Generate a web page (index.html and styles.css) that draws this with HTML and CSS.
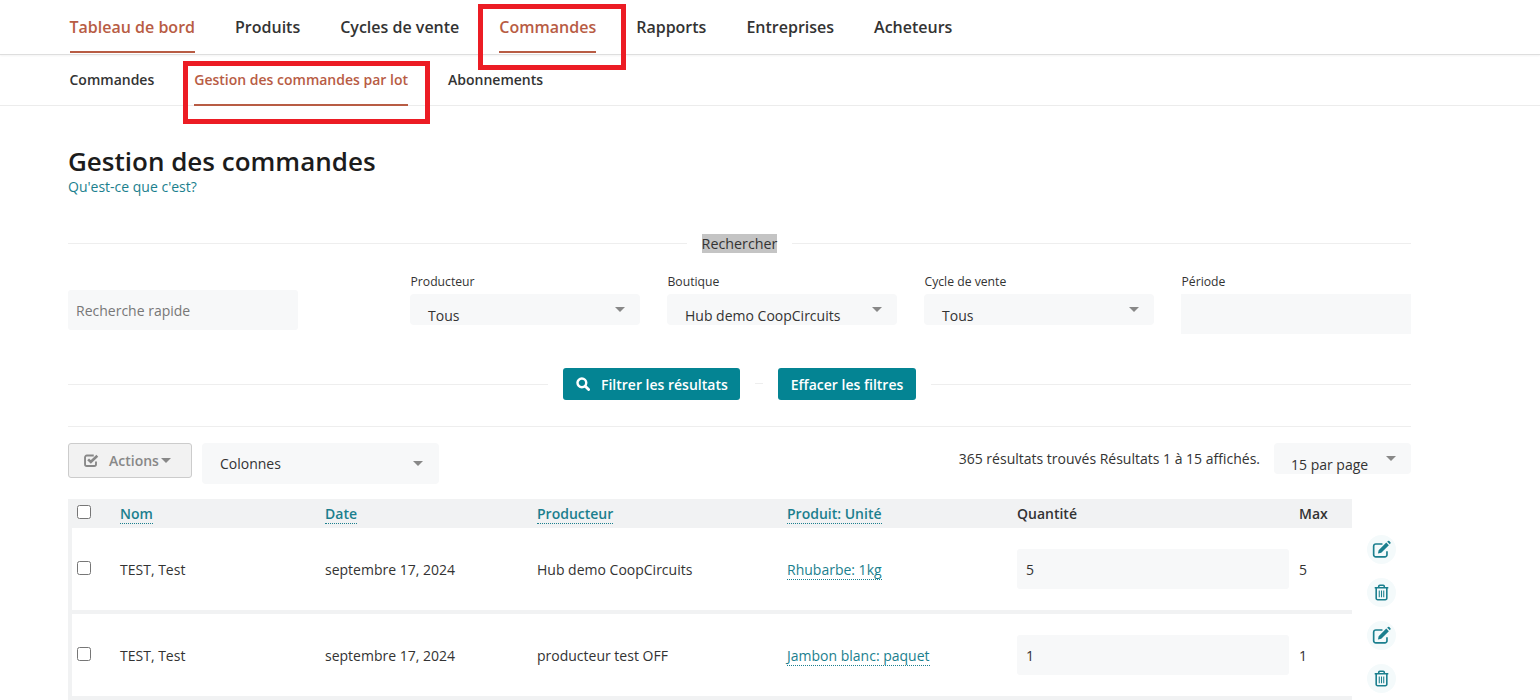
FILE: index.html
```html
<!DOCTYPE html>
<html lang="fr">

<head>
  <meta charset="UTF-8">
  <title>Gestion des commandes</title>
  <link rel="stylesheet" href="styles.css">
</head>

<body>
  <!-- Navigation principale -->
  <nav class="main-nav">
    <a class="active" href="#">Tableau de bord</a>
    <a href="#">Produits</a>
    <a href="#">Cycles de vente</a>
    <a class="active" href="#">Commandes</a>
    <a href="#">Rapports</a>
    <a href="#">Entreprises</a>
    <a href="#">Acheteurs</a>
  </nav>

  <nav class="sub-nav">
    <a href="#">Commandes</a>
    <a class="active" href="#">Gestion des commandes par lot</a>
    <a href="#">Abonnements</a>
  </nav>

  <!-- Annotations rouges -->
  <div class="mark mark-main"></div>
  <div class="mark mark-sub"></div>

  <main class="page">
    <h1>Gestion des commandes</h1>
    <a class="help" href="#">Qu'est-ce que c'est?</a>

    <div class="divider search-title"><span><mark>Rechercher</mark></span></div>

    <div class="filters">
      <div class="quick-search">Recherche rapide</div>
      <div class="filter">
        <label>Producteur</label>
        <div class="select">Tous</div>
      </div>
      <div class="filter">
        <label>Boutique</label>
        <div class="select">Hub demo CoopCircuits</div>
      </div>
      <div class="filter">
        <label>Cycle de vente</label>
        <div class="select">Tous</div>
      </div>
      <div class="filter">
        <label>Période</label>
        <div class="period"></div>
      </div>
    </div>

    <div class="divider filter-actions">
      <button class="btn btn-search">
        <svg viewBox="0 0 16 16" width="14" height="14">
          <circle cx="6.7" cy="6.7" r="5" fill="none" stroke="#fff" stroke-width="2.8" />
          <path d="M10.6 10.6 14.4 14.4" stroke="#fff" stroke-width="3.2" stroke-linecap="round" />
        </svg>
        Filtrer les résultats
      </button>
      <button class="btn">Effacer les filtres</button>
    </div>

    <hr class="rule">

    <div class="toolbar">
      <button class="actions">
        <svg viewBox="0 0 16 16" width="15" height="15">
          <path d="M12.8 9v2.9a1.9 1.9 0 0 1-1.9 1.9H3a1.9 1.9 0 0 1-1.9-1.9V4.6A1.9 1.9 0 0 1 3 2.7h7.4" fill="none" stroke="#888" stroke-width="2" />
          <path d="M4.4 6.8 7.3 9.6 14.2 2.9" fill="none" stroke="#888" stroke-width="2.8" />
        </svg>
        Actions<i class="caret"></i>
      </button>
      <div class="select columns">Colonnes</div>
      <div class="count">365 résultats trouvés Résultats 1 à 15 affichés.</div>
      <div class="select per-page">15 par page</div>
    </div>

    <div class="results">
      <table class="orders">
        <thead>
          <tr>
            <th class="col-check"><input type="checkbox"></th>
            <th class="col-name"><a href="#">Nom</a></th>
            <th class="col-date"><a href="#">Date</a></th>
            <th class="col-producer"><a href="#">Producteur</a></th>
            <th class="col-product"><a href="#">Produit: Unité</a></th>
            <th class="col-qty">Quantité</th>
            <th class="col-max">Max</th>
          </tr>
        </thead>
        <tbody>
          <tr>
            <td><input type="checkbox"></td>
            <td>TEST, Test</td>
            <td>septembre 17, 2024</td>
            <td>Hub demo CoopCircuits</td>
            <td><a href="#">Rhubarbe: 1kg</a></td>
            <td><div class="qty">5</div></td>
            <td>5</td>
          </tr>
          <tr>
            <td><input type="checkbox"></td>
            <td>TEST, Test</td>
            <td>septembre 17, 2024</td>
            <td>producteur test OFF</td>
            <td><a href="#">Jambon blanc: paquet</a></td>
            <td><div class="qty">1</div></td>
            <td>1</td>
          </tr>
        </tbody>
      </table>

      <div class="row-tools">
        <button class="round"><svg viewBox="0 0 16 16" width="19" height="19"><use href="#icon-edit" /></svg></button>
        <button class="round"><svg viewBox="0 0 16 16" width="17" height="17"><use href="#icon-trash" /></svg></button>
        <button class="round"><svg viewBox="0 0 16 16" width="19" height="19"><use href="#icon-edit" /></svg></button>
        <button class="round"><svg viewBox="0 0 16 16" width="17" height="17"><use href="#icon-trash" /></svg></button>
      </div>
    </div>
  </main>

  <svg class="icon-defs" width="0" height="0">
    <symbol id="icon-edit" viewBox="0 0 16 16">
      <path d="M12.6 9.4v3a1.8 1.8 0 0 1-1.8 1.8H3.2a1.8 1.8 0 0 1-1.8-1.8V5.2a1.8 1.8 0 0 1 1.8-1.8h5.6" fill="none" stroke="#1b7f8e" stroke-width="1.4" />
      <path d="M5.6 8.6 12 2.2l2.2 2.2-6.4 6.4-2.8.6zM12.8 1.4l.6-.5a.9.9 0 0 1 1.2 0l.9.9a.9.9 0 0 1 0 1.2l-.5.6z" fill="#1b7f8e" />
    </symbol>
    <symbol id="icon-trash" viewBox="0 0 16 16">
      <path d="M1.6 3.6h12.8M5.4 3.4V2.2a1 1 0 0 1 1-1h3.2a1 1 0 0 1 1 1v1.2M3 3.8v9.6a1.4 1.4 0 0 0 1.4 1.4h7.2a1.4 1.4 0 0 0 1.4-1.4V3.8" fill="none" stroke="#1b7f8e" stroke-width="1.5" />
      <path d="M5.9 6v6.4M8 6v6.4M10.1 6v6.4" stroke="#1b7f8e" stroke-width="1" />
    </symbol>
  </svg>
</body>

</html>
```

FILE: styles.css
```css
html,
body {
  height: 700px;
  overflow: hidden;
}

body {
  margin: 0;
  position: relative;
  background: #fff;
  color: #333;
  font-family: "Open Sans", sans-serif;
  font-size: 14px;
}

a {
  text-decoration: none;
}

/* Navigation */
.main-nav {
  display: flex;
  gap: 40px;
  height: 54px;
  padding-left: 69.5px;
  border-bottom: 1px solid #dedede;
  box-shadow: 0 1px 2px rgba(0, 0, 0, 0.05);
}

.main-nav a {
  height: 51px;
  padding-top: 15px;
  box-sizing: border-box;
  color: #333;
  font-size: 16px;
  font-weight: 600;
  line-height: 24px;
}

.main-nav a.active {
  height: 53px;
  color: #b85c44;
  border-bottom: 2px solid #b85c44;
}

.sub-nav {
  display: flex;
  gap: 40px;
  height: 50px;
  padding-left: 69.5px;
  border-bottom: 1px solid #ececec;
}

.sub-nav a {
  height: 50px;
  box-sizing: border-box;
  padding-top: 15px;
  color: #333;
  font-size: 14px;
  font-weight: 600;
  line-height: 20px;
}

.sub-nav a.active {
  color: #b85c44;
}

.sub-nav a.active::after {
  content: "";
  display: block;
  height: 2px;
  margin-top: 14px;
  background: #b85c44;
}

.mark {
  position: absolute;
  box-sizing: border-box;
  border: 5px solid #ec1c24;
}

.mark-main {
  left: 478px;
  top: 4px;
  width: 148px;
  height: 66px;
}

.mark-sub {
  left: 183px;
  top: 61px;
  width: 247px;
  height: 63px;
}

/* Contenu */
.page {
  width: 1343px;
  margin-left: 68px;
  padding-top: 38px;
}

h1 {
  margin: 0;
  color: #1c1c1c;
  font-size: 26px;
  font-weight: 600;
  line-height: 34px;
}

.help {
  display: block;
  color: #1b7f8e;
  font-size: 14px;
  line-height: 18px;
}

.divider {
  display: flex;
  align-items: center;
  justify-content: center;
}

.divider::before,
.divider::after {
  content: "";
  flex: 1;
  border-top: 1px solid #eeeeee;
}

.search-title {
  margin-top: 37px;
  height: 20px;
  font-size: 14.3px;
}

.search-title span {
  padding: 0 14.5px;
}

.search-title mark {
  background: #c4c4c4;
  color: #333;
}

.filters {
  display: flex;
  height: 115px;
  margin-top: 0;
}

.quick-search {
  width: 230px;
  height: 40px;
  margin-top: 37px;
  margin-right: 112px;
  padding-left: 8px;
  box-sizing: border-box;
  background: #f7f8f9;
  border-radius: 3px;
  color: #777;
  font-size: 14px;
  line-height: 41px;
}

.filter {
  width: 230px;
  margin-right: 27px;
  padding-top: 20px;
}

.filter:last-child {
  margin-right: 0;
}

.filter label {
  display: block;
  height: 21px;
  padding-left: 0.5px;
  font-size: 12.2px;
  line-height: 18px;
}

.select {
  position: relative;
  height: 31px;
  padding-left: 18px;
  box-sizing: border-box;
  background: #f7f8f9;
  border-radius: 4px;
  font-size: 14px;
  line-height: 43px;
  overflow: hidden;
}

.select::after {
  content: "";
  position: absolute;
  top: 13px;
  right: 15px;
  border-left: 5px solid transparent;
  border-right: 5px solid transparent;
  border-top: 5px solid #888;
}

.period {
  height: 40px;
  background: #f7f8f9;
}

.filter-actions {
  height: 32px;
}

.btn {
  height: 32px;
  padding: 0 12.5px;
  border: none;
  border-radius: 3px;
  background: #048493;
  color: #fff;
  font-family: inherit;
  font-size: 14px;
  font-weight: 600;
}

.btn-search {
  display: flex;
  align-items: center;
  gap: 11px;
  padding-left: 13px;
}

.filter-actions::before {
  margin-right: 15px;
  flex: none;
  width: 480px;
}

.filter-actions .btn + .btn {
  margin-left: 38px;
  position: relative;
}

.filter-actions::after {
  margin-left: 15px;
}

.filter-actions .btn-search + .btn::before {
  content: "";
  position: absolute;
  left: -23px;
  top: 15px;
  width: 8px;
  border-top: 1px solid #eeeeee;
}

.rule {
  margin: 26px 0 16px;
  border: none;
  border-top: 1px solid #eeeeee;
}

.toolbar {
  display: flex;
  height: 41px;
}

.actions {
  display: flex;
  align-items: center;
  gap: 10px;
  width: 124px;
  height: 35px;
  padding: 0 0 0 15px;
  box-sizing: border-box;
  border: 1px solid #ccc;
  border-radius: 3px;
  background: #f2f2f2;
  color: #888;
  font-family: inherit;
  font-size: 14px;
  font-weight: 600;
}

.caret {
  margin-left: -8px;
  border-left: 5px solid transparent;
  border-right: 5px solid transparent;
  border-top: 5px solid #888;
}

.columns {
  width: 237px;
  height: 41px;
  margin-left: 10px;
  line-height: 42px;
}

.columns::after {
  top: 18px;
  right: 16px;
}

.count {
  margin-left: auto;
  margin-right: 14px;
  padding-top: 6px;
  font-size: 14px;
  line-height: 20px;
}

.per-page {
  width: 137px;
  padding-left: 17px;
  line-height: 44px;
}

/* Tableau */
.results {
  display: flex;
  margin-top: 15px;
}

.orders {
  width: 1284px;
  table-layout: fixed;
  border-collapse: collapse;
  border-left: 4px solid #f1f2f3;
}

.orders a {
  color: #1b7f8e;
  border-bottom: 1px dotted #1b7f8e;
}

.orders th {
  height: 29px;
  padding: 0;
  background: #f1f2f3;
  color: #333;
  font-size: 14px;
  font-weight: 600;
  text-align: left;
}

.orders td {
  height: 82px;
  padding: 0;
  border-bottom: 4px solid #f1f2f3;
}

.orders input {
  display: block;
  width: 14px;
  height: 14px;
  margin: 0 0 0 5px;
}

.orders td input {
  margin-top: -3px;
}

.orders th input {
  margin-top: -4px;
}

.col-check {
  width: 48px;
}

.col-name {
  width: 205px;
}

.col-date {
  width: 212px;
}

.col-producer {
  width: 250px;
}

.col-product {
  width: 230px;
}

.col-qty {
  width: 282px;
}

.qty {
  width: 272px;
  height: 40px;
  padding-left: 9px;
  box-sizing: border-box;
  background: #f7f8f9;
  border-radius: 3px;
  line-height: 41px;
}

.row-tools {
  display: flex;
  flex-direction: column;
  gap: 14px;
  margin-left: 15px;
  padding-top: 36px;
}

.round {
  display: flex;
  align-items: center;
  justify-content: center;
  width: 29px;
  height: 29px;
  padding: 0;
  border: none;
  border-radius: 50%;
  background: #f4fafb;
}

.icon-defs {
  position: absolute;
}
```
